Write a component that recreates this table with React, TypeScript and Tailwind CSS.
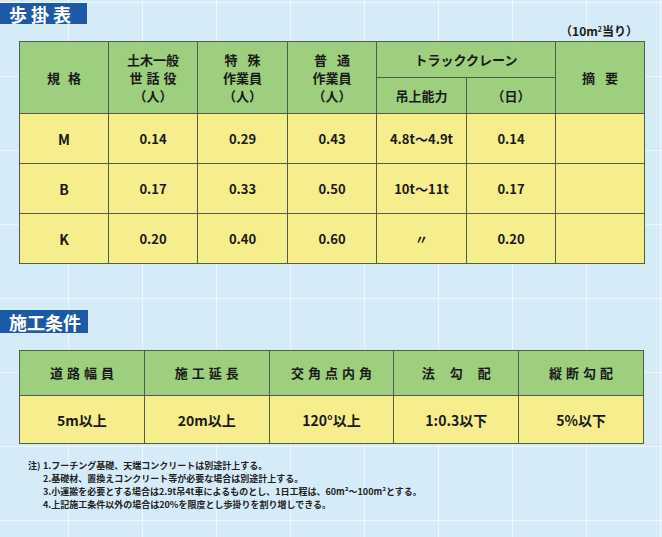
import React from 'react';

const font = { fontFamily: '"Noto Sans CJK JP", "Noto Sans", sans-serif' };

const rows = [
  ['M', '0.14', '0.29', '0.43', '4.8t～4.9t', '0.14', ''],
  ['B', '0.17', '0.33', '0.50', '10t～11t', '0.17', ''],
  ['K', '0.20', '0.40', '0.60', '〃', '0.20', ''],
];

const conditions = [
  ['道路幅員', '5m以上'],
  ['施工延長', '20m以上'],
  ['交角点内角', '120°以上'],
  ['法 勾 配', '1:0.3以下'],
  ['縦断勾配', '5%以下'],
];

const notes = [
  '1.フーチング基礎、天端コンクリートは別途計上する。',
  '2.基礎材、置換えコンクリート等が必要な場合は別途計上する。',
  '3.小運搬を必要とする場合は2.9t吊4t車によるものとし、1日工程は、60m²～100m²とする。',
  '4.上記施工条件以外の場合は20%を限度とし歩掛りを割り増しできる。',
];

const cell = 'border border-[#4f5e48] text-center align-middle';

function SectionTitle({ label, spaced }: { label: string; spaced?: boolean }) {
  return (
    <div
      className={
        'flex items-center bg-[#1d5aa6] text-white font-bold text-[18px] leading-none pl-[9px] ' +
        (spaced ? 'w-[87px] h-[21px] tracking-[4px]' : 'w-[88px] h-[23px] tracking-[0px]')
      }
    >
      {label}
    </div>
  );
}

export default function App() {
  return (
    <div
      className="w-[662px] h-[537px] overflow-hidden bg-[#d5ebf7] bg-[linear-gradient(to_right,rgba(255,255,255,0.55)_1px,transparent_1px),linear-gradient(to_bottom,rgba(255,255,255,0.55)_1px,transparent_1px)] bg-[size:74px_74px] bg-[position:-6px_2px] text-[#1a1a1a]"
      style={font}
    >
      <div className="pt-[3px]">
        <SectionTitle label="歩掛表" spaced />
      </div>
      <div className="flex justify-end pr-[24px] h-[17px] items-start pt-[1px] text-[12px] font-bold leading-none">
        <span>
          （10m<sup className="text-[7px] -top-[4px]">2</sup>当り）
        </span>
      </div>

      <table className="ml-[19px] w-[625px] table-fixed border-collapse text-[13px] font-bold leading-[18px]">
        <colgroup>
          <col className="w-[89px]" />
          <col className="w-[89px]" />
          <col className="w-[90px]" />
          <col className="w-[89px]" />
          <col className="w-[90px]" />
          <col className="w-[89px]" />
          <col className="w-[89px]" />
        </colgroup>
        <thead className="bg-[#9dcf7f]">
          <tr className="h-[36px]">
            <th rowSpan={2} className={cell + ' tracking-[8px] pl-[8px]'}>規格</th>
            <th rowSpan={2} className={cell}>
              <div>土木一般</div>
              <div className="tracking-[4px] pl-[4px]">世話役</div>
              <div>（人）</div>
            </th>
            <th rowSpan={2} className={cell}>
              <div className="tracking-[10px] pl-[10px]">特殊</div>
              <div>作業員</div>
              <div>（人）</div>
            </th>
            <th rowSpan={2} className={cell}>
              <div className="tracking-[10px] pl-[10px]">普通</div>
              <div>作業員</div>
              <div>（人）</div>
            </th>
            <th colSpan={2} className={cell}>トラッククレーン</th>
            <th rowSpan={2} className={cell + ' tracking-[10px] pl-[10px]'}>摘要</th>
          </tr>
          <tr className="h-[36px]">
            <th className={cell}>吊上能力</th>
            <th className={cell}>（日）</th>
          </tr>
        </thead>
        <tbody className="bg-[#f6ed8d]">
          {rows.map((row, i) => (
            <tr key={i} className="h-[50px]">
              {row.map((v, j) => (
                <td key={j} className={cell + (j === 0 ? ' text-[14px]' : '')}>
                  {v}
                </td>
              ))}
            </tr>
          ))}
        </tbody>
      </table>

      <div className="mt-[46px]">
        <SectionTitle label="施工条件" />
      </div>

      <table className="ml-[19px] mt-[17px] w-[625px] table-fixed border-collapse text-[13px] font-bold leading-[18px]">
        <thead className="bg-[#9dcf7f]">
          <tr className="h-[45px]">
            {conditions.map(([h], i) => (
              <th
                key={i}
                className={cell + (i === 3 ? ' tracking-[6px] pl-[6px] whitespace-pre' : ' tracking-[4px] pl-[4px]')}
              >
                {h}
              </th>
            ))}
          </tr>
        </thead>
        <tbody className="bg-[#f6ed8d]">
          <tr className="h-[48px]">
            {conditions.map(([, v], i) => (
              <td key={i} className={cell + ' text-[14px]'}>
                {v}
              </td>
            ))}
          </tr>
        </tbody>
      </table>

      <div className="mt-[15px] pl-[28px] text-[9px] font-bold leading-[13px] text-[#222]">
        {notes.map((n, i) => (
          <div key={i} className="flex">
            <span className={'w-[15px] shrink-0 whitespace-nowrap ' + (i === 0 ? '' : 'invisible')}>注)</span>
            <span>{n}</span>
          </div>
        ))}
      </div>
    </div>
  );
}
